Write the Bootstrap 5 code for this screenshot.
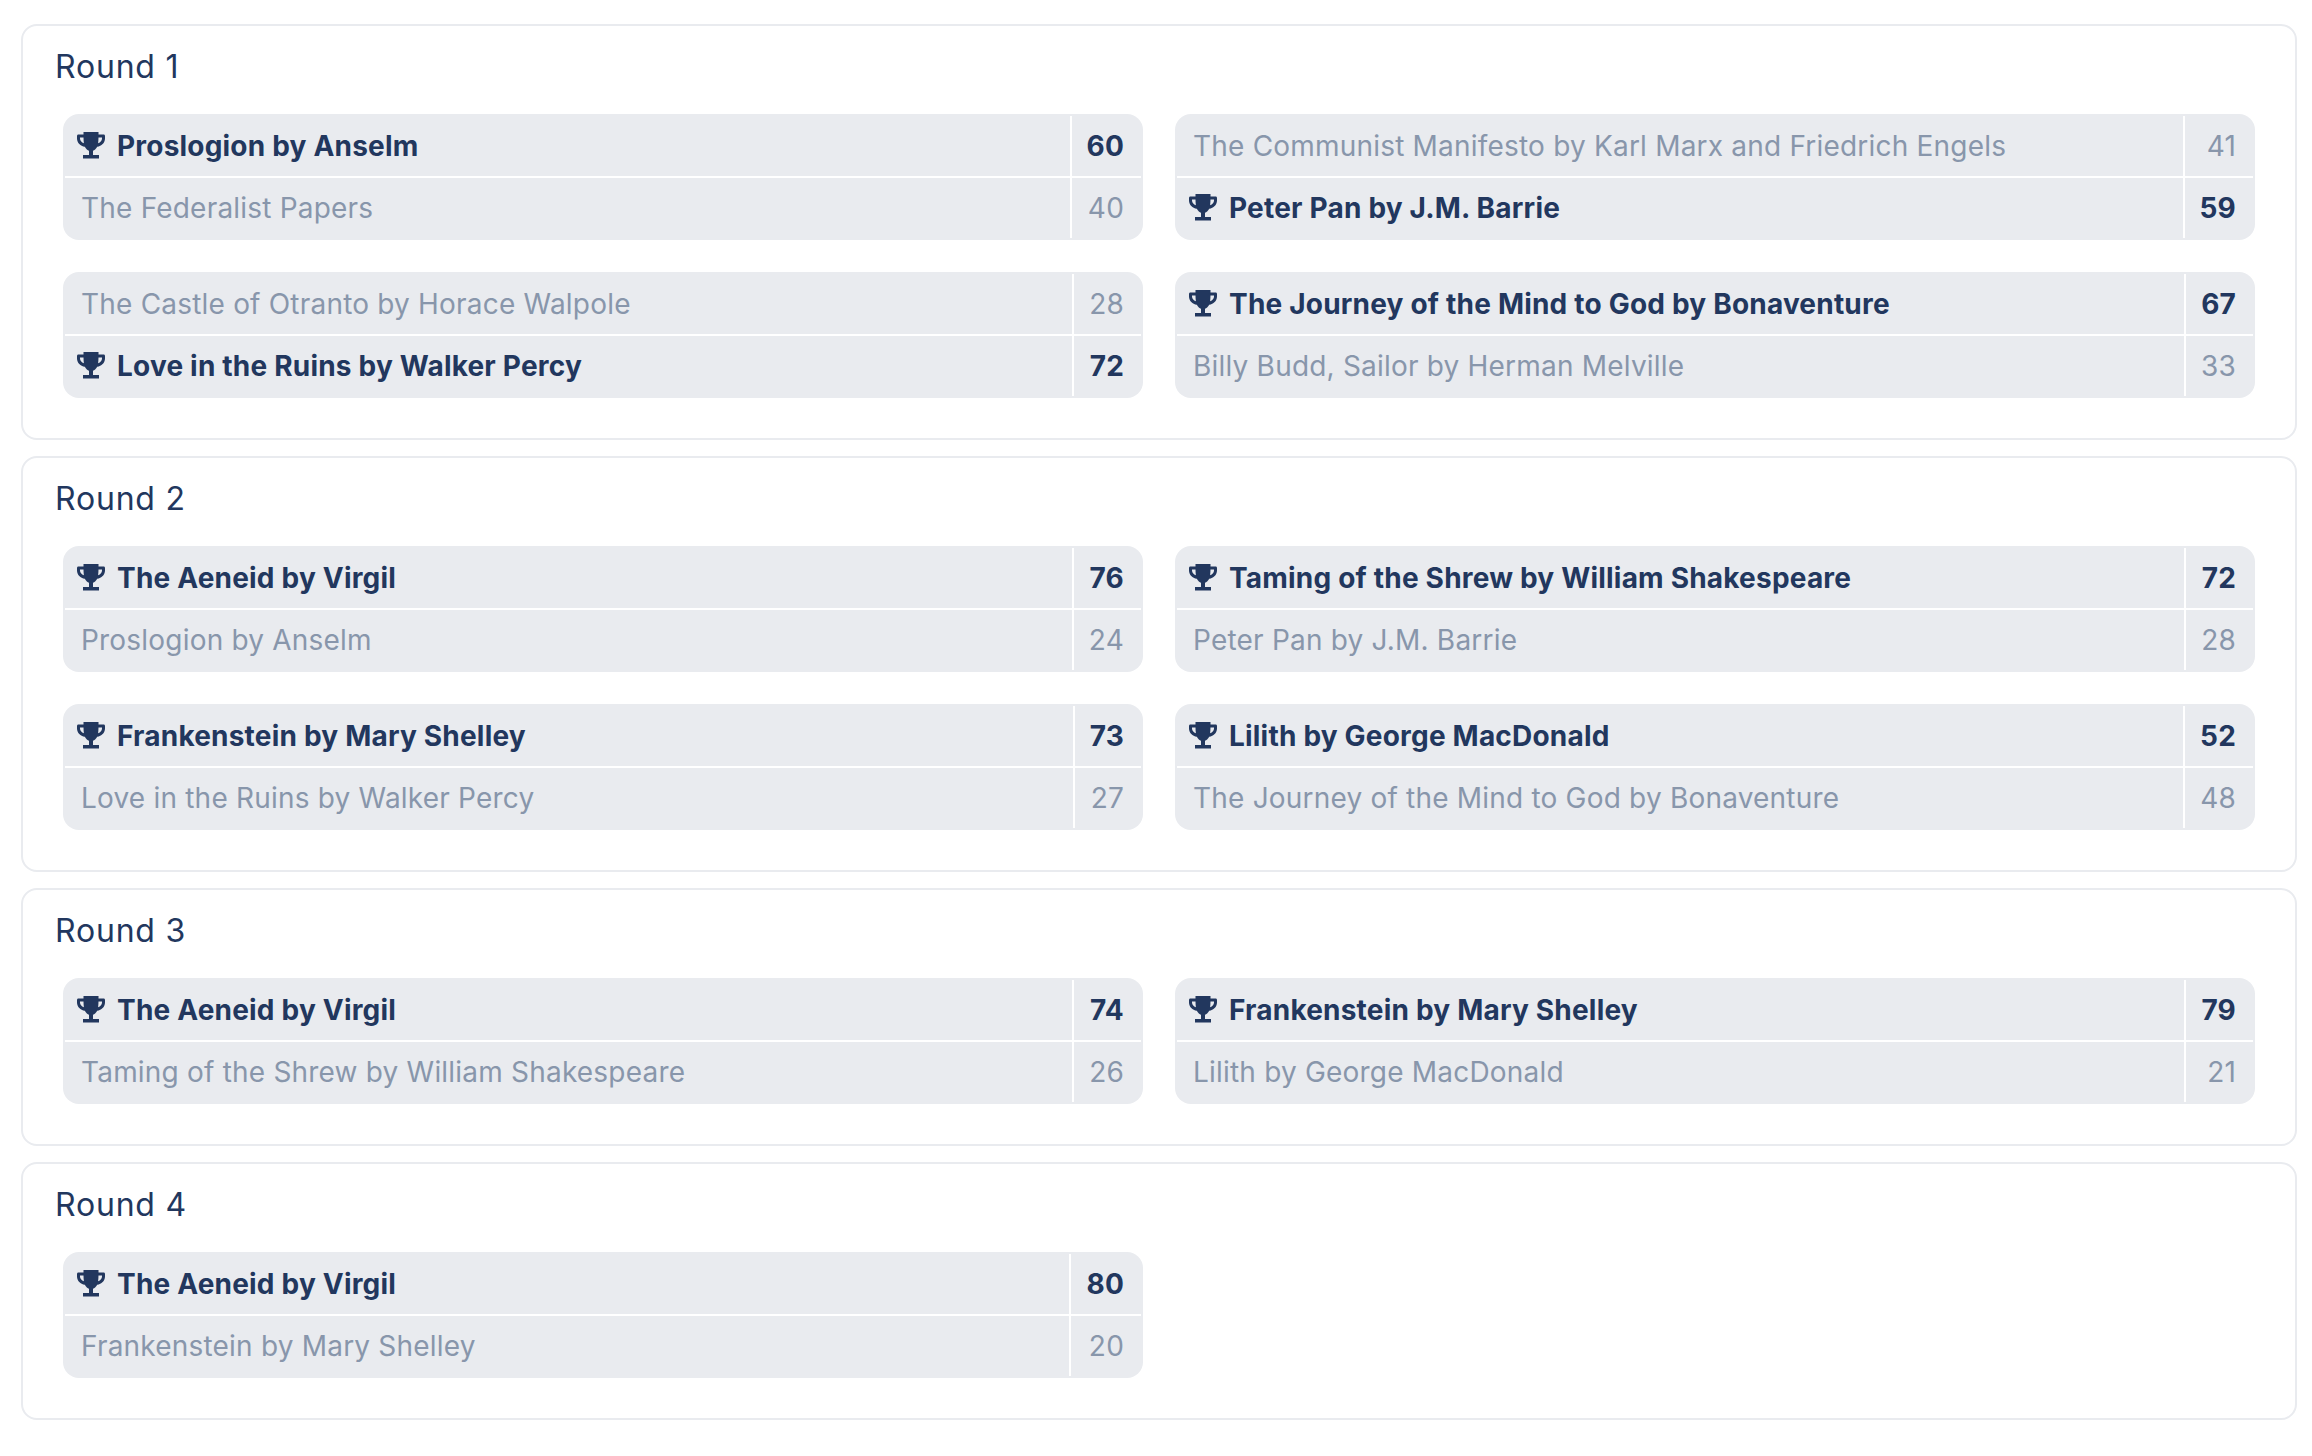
<!DOCTYPE html>
<html lang="en"><head><meta charset="utf-8"><title>Bracket</title>
<link href="https://cdn.jsdelivr.net/npm/bootstrap@5.3.0/dist/css/bootstrap.min.css" rel="stylesheet">
<style>
body{font-family:Inter,"Liberation Sans",sans-serif;color:#22375e;background:#fff;font-size:28px}
.shell{padding:24px 15px 0 21px;display:flex;flex-direction:column;gap:16px}
.round-box{border:2px solid #e9ebef;border-radius:16px;padding:17px 40px 40px 32px}
.round-title{font-size:32px;font-weight:400;line-height:48px;margin:0 0 23px;letter-spacing:.8px}
.match-grid{display:grid;grid-template-columns:1fr 1fr;gap:32px;margin-left:8px}
.match-box{background:#e9ebef;border-radius:16px;padding:2px}
.match-table{width:100%;border-collapse:separate;border-spacing:0;font-size:28px;letter-spacing:.2px}
.match-table td{height:60px;padding:0;vertical-align:middle;line-height:40px}
.match-table tr:first-child td{border-bottom:2px solid #fff;height:62px}
.match-table .nm{padding-left:12px;width:100%}
.match-table .sc{border-left:2px solid #fff;padding:0 17px 0 15px;text-align:right}
.win{font-weight:700;color:#22375e}
.lose{color:#8896ab}
.lose .nm{padding-left:16px}
.cup{width:28px;height:28px;margin-right:12px;vertical-align:-4px;fill:#22375e}
</style></head><body>
<svg width="0" height="0" class="position-absolute"><defs><symbol id="t" viewBox="0 0 28 28"><path fill-rule="evenodd" d="M6.500 0h15v2.500h5c1 0 1.500.6 1.500 1.500v2.500c0 4.500-3.500 7.500-7.800 8.300-1.300 2.300-2.800 3.500-4.200 3.900V23h6v3.500H6V23h6v-4.300c-1.400-.4-2.900-1.600-4.200-3.900C3.500 14 0 11 0 6.500V4c0-.9.5-1.500 1.500-1.500h5zM3 5.500v1c0 2 1.500 4 3.900 4.800-.2-1.800-.4-3.700-.4-5.800zm22 0h-3.500c0 2.100-.2 4-.4 5.800 2.400-.8 3.900-2.800 3.900-4.800z"/></symbol></defs></svg>
<div class="shell">
<section class="round-box"><h2 class="round-title">Round 1</h2><div class="match-grid">
<div class="match-box"><table class="match-table"><tr class="win"><td class="nm"><svg class="cup"><use href="#t"/></svg>Proslogion by Anselm</td><td class="sc">60</td></tr><tr class="lose"><td class="nm">The Federalist Papers</td><td class="sc">40</td></tr></table></div>
<div class="match-box"><table class="match-table"><tr class="lose"><td class="nm">The Communist Manifesto by Karl Marx and Friedrich Engels</td><td class="sc">41</td></tr><tr class="win"><td class="nm"><svg class="cup"><use href="#t"/></svg>Peter Pan by J.M. Barrie</td><td class="sc">59</td></tr></table></div>
<div class="match-box"><table class="match-table"><tr class="lose"><td class="nm">The Castle of Otranto by Horace Walpole</td><td class="sc">28</td></tr><tr class="win"><td class="nm"><svg class="cup"><use href="#t"/></svg>Love in the Ruins by Walker Percy</td><td class="sc">72</td></tr></table></div>
<div class="match-box"><table class="match-table"><tr class="win"><td class="nm"><svg class="cup"><use href="#t"/></svg>The Journey of the Mind to God by Bonaventure</td><td class="sc">67</td></tr><tr class="lose"><td class="nm">Billy Budd, Sailor by Herman Melville</td><td class="sc">33</td></tr></table></div>
</div></section>
<section class="round-box"><h2 class="round-title">Round 2</h2><div class="match-grid">
<div class="match-box"><table class="match-table"><tr class="win"><td class="nm"><svg class="cup"><use href="#t"/></svg>The Aeneid by Virgil</td><td class="sc">76</td></tr><tr class="lose"><td class="nm">Proslogion by Anselm</td><td class="sc">24</td></tr></table></div>
<div class="match-box"><table class="match-table"><tr class="win"><td class="nm"><svg class="cup"><use href="#t"/></svg>Taming of the Shrew by William Shakespeare</td><td class="sc">72</td></tr><tr class="lose"><td class="nm">Peter Pan by J.M. Barrie</td><td class="sc">28</td></tr></table></div>
<div class="match-box"><table class="match-table"><tr class="win"><td class="nm"><svg class="cup"><use href="#t"/></svg>Frankenstein by Mary Shelley</td><td class="sc">73</td></tr><tr class="lose"><td class="nm">Love in the Ruins by Walker Percy</td><td class="sc">27</td></tr></table></div>
<div class="match-box"><table class="match-table"><tr class="win"><td class="nm"><svg class="cup"><use href="#t"/></svg>Lilith by George MacDonald</td><td class="sc">52</td></tr><tr class="lose"><td class="nm">The Journey of the Mind to God by Bonaventure</td><td class="sc">48</td></tr></table></div>
</div></section>
<section class="round-box"><h2 class="round-title">Round 3</h2><div class="match-grid">
<div class="match-box"><table class="match-table"><tr class="win"><td class="nm"><svg class="cup"><use href="#t"/></svg>The Aeneid by Virgil</td><td class="sc">74</td></tr><tr class="lose"><td class="nm">Taming of the Shrew by William Shakespeare</td><td class="sc">26</td></tr></table></div>
<div class="match-box"><table class="match-table"><tr class="win"><td class="nm"><svg class="cup"><use href="#t"/></svg>Frankenstein by Mary Shelley</td><td class="sc">79</td></tr><tr class="lose"><td class="nm">Lilith by George MacDonald</td><td class="sc">21</td></tr></table></div>
</div></section>
<section class="round-box"><h2 class="round-title">Round 4</h2><div class="match-grid">
<div class="match-box"><table class="match-table"><tr class="win"><td class="nm"><svg class="cup"><use href="#t"/></svg>The Aeneid by Virgil</td><td class="sc">80</td></tr><tr class="lose"><td class="nm">Frankenstein by Mary Shelley</td><td class="sc">20</td></tr></table></div>
</div></section>
</div>
<script src="https://cdn.jsdelivr.net/npm/bootstrap@5.3.0/dist/js/bootstrap.bundle.min.js"></script>
</body></html>
